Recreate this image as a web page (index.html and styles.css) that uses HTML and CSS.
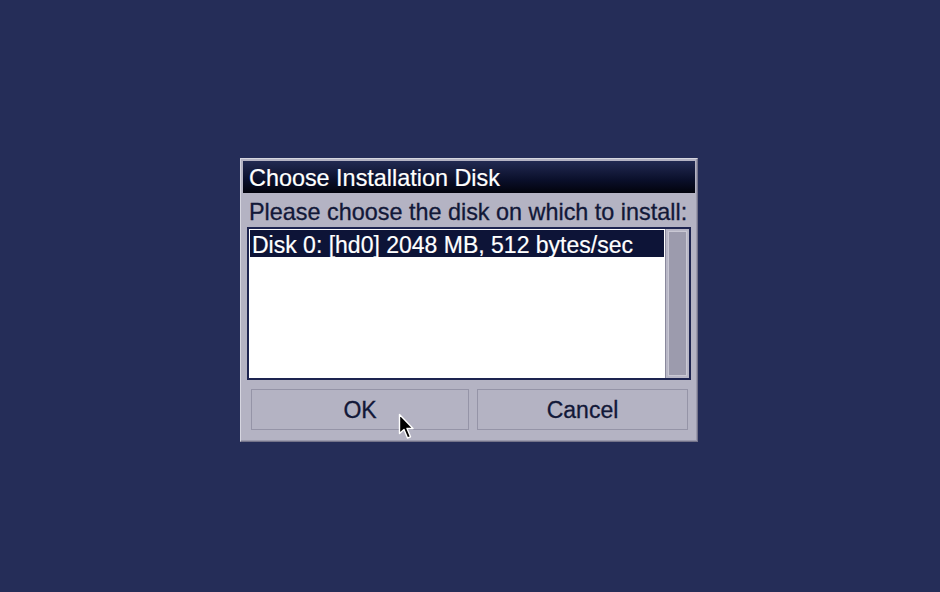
FILE: index.html
```html
<!DOCTYPE html>
<html>
<head>
<meta charset="utf-8">
<link rel="stylesheet" href="styles.css">
</head>
<body>
<div class="dialog">
  <div class="titlebar">Choose Installation Disk</div>
  <div class="prompt">Please choose the disk on which to install:</div>
  <div class="list">
    <div class="items">
      <div class="row selected">Disk 0: [hd0] 2048 MB, 512 bytes/sec</div>
    </div>
    <div class="scrollbar"><div class="thumb"></div></div>
  </div>
  <div class="buttons">
    <div class="button ok">OK
      <svg class="cursor" width="18" height="28" viewBox="0 0 18 28">
        <path d="M1.5 1.5 L1.5 20.5 L6 16.5 L9.5 25 L12.5 23.8 L9 15.5 L15 15.5 Z" fill="#000" stroke="#fff" stroke-width="1.4" stroke-linejoin="round"/>
      </svg>
    </div>
    <div class="button cancel">Cancel</div>
  </div>
</div>
</body>
</html>
```

FILE: styles.css
```css
html, body {
  margin: 0;
  padding: 0;
}
body {
  width: 940px;
  height: 592px;
  background: #252d58;
  font-family: "Liberation Sans", Arial, sans-serif;
  font-size: 23px;
  overflow: hidden;
  display: flex;
  align-items: flex-start;
}
.dialog {
  margin-left: 240px;
  margin-top: 158px;
  width: 458px;
  height: 284px;
  box-sizing: border-box;
  border: 1px solid;
  border-color: #d6d6e0 #74738a #74738a #d6d6e0;
  background: #b4b3c3;
  padding: 2px;
  display: flex;
  flex-direction: column;
  box-shadow: inset -1px -1px 0 #9a99ac;
}
.titlebar {
  height: 32px;
  box-sizing: border-box;
  padding-top: 1px;
  line-height: 32px;
  padding-left: 6px;
  font-size: 23.4px;
  color: #ffffff;
  background: linear-gradient(#222a52, #0a0f2a 60%, #02030c);
  white-space: nowrap;
  -webkit-text-stroke: 0.2px #ffffff;
}
.prompt {
  height: 34px;
  box-sizing: border-box;
  padding-top: 2px;
  line-height: 34px;
  padding-left: 6px;
  font-size: 23.4px;
  color: #121838;
  white-space: nowrap;
  -webkit-text-stroke: 0.3px #121838;
}
.list {
  margin: 0 4px;
  height: 153px;
  box-sizing: border-box;
  border: 2px solid #1d2450;
  background: #ffffff;
  padding: 1px 0 1px 1px;
  display: flex;
}
.items {
  width: 414px;
}
.row {
  height: 27px;
  box-sizing: border-box;
  padding-top: 2px;
  line-height: 27px;
  padding-left: 2px;
  white-space: nowrap;
}
.selected {
  background: #0d1437;
  color: #ffffff;
  -webkit-text-stroke: 0.2px #ffffff;
}
.scrollbar {
  width: 24px;
  margin-left: 1px;
  margin-top: -1px;
  margin-bottom: -1px;
  box-sizing: border-box;
  background: #b8b7c6;
  border-left: 1px solid #8a899c;
  padding: 2px;
  display: flex;
}
.thumb {
  flex: 1;
  background: #9c9bad;
  border: 1px solid #c9c8d4;
}
.buttons {
  display: flex;
  margin-top: 9px;
  padding-left: 8px;
  gap: 8px;
}
.button {
  height: 41px;
  box-sizing: border-box;
  border: 1px solid #9594a7;
  background: #b4b3c3;
  color: #121838;
  line-height: 41px;
  text-align: center;
  -webkit-text-stroke: 0.3px #121838;
}
.ok {
  width: 218px;
  position: relative;
}
.cancel {
  width: 211px;
}
.cursor {
  position: absolute;
  left: 146px;
  top: 23px;
}
```
